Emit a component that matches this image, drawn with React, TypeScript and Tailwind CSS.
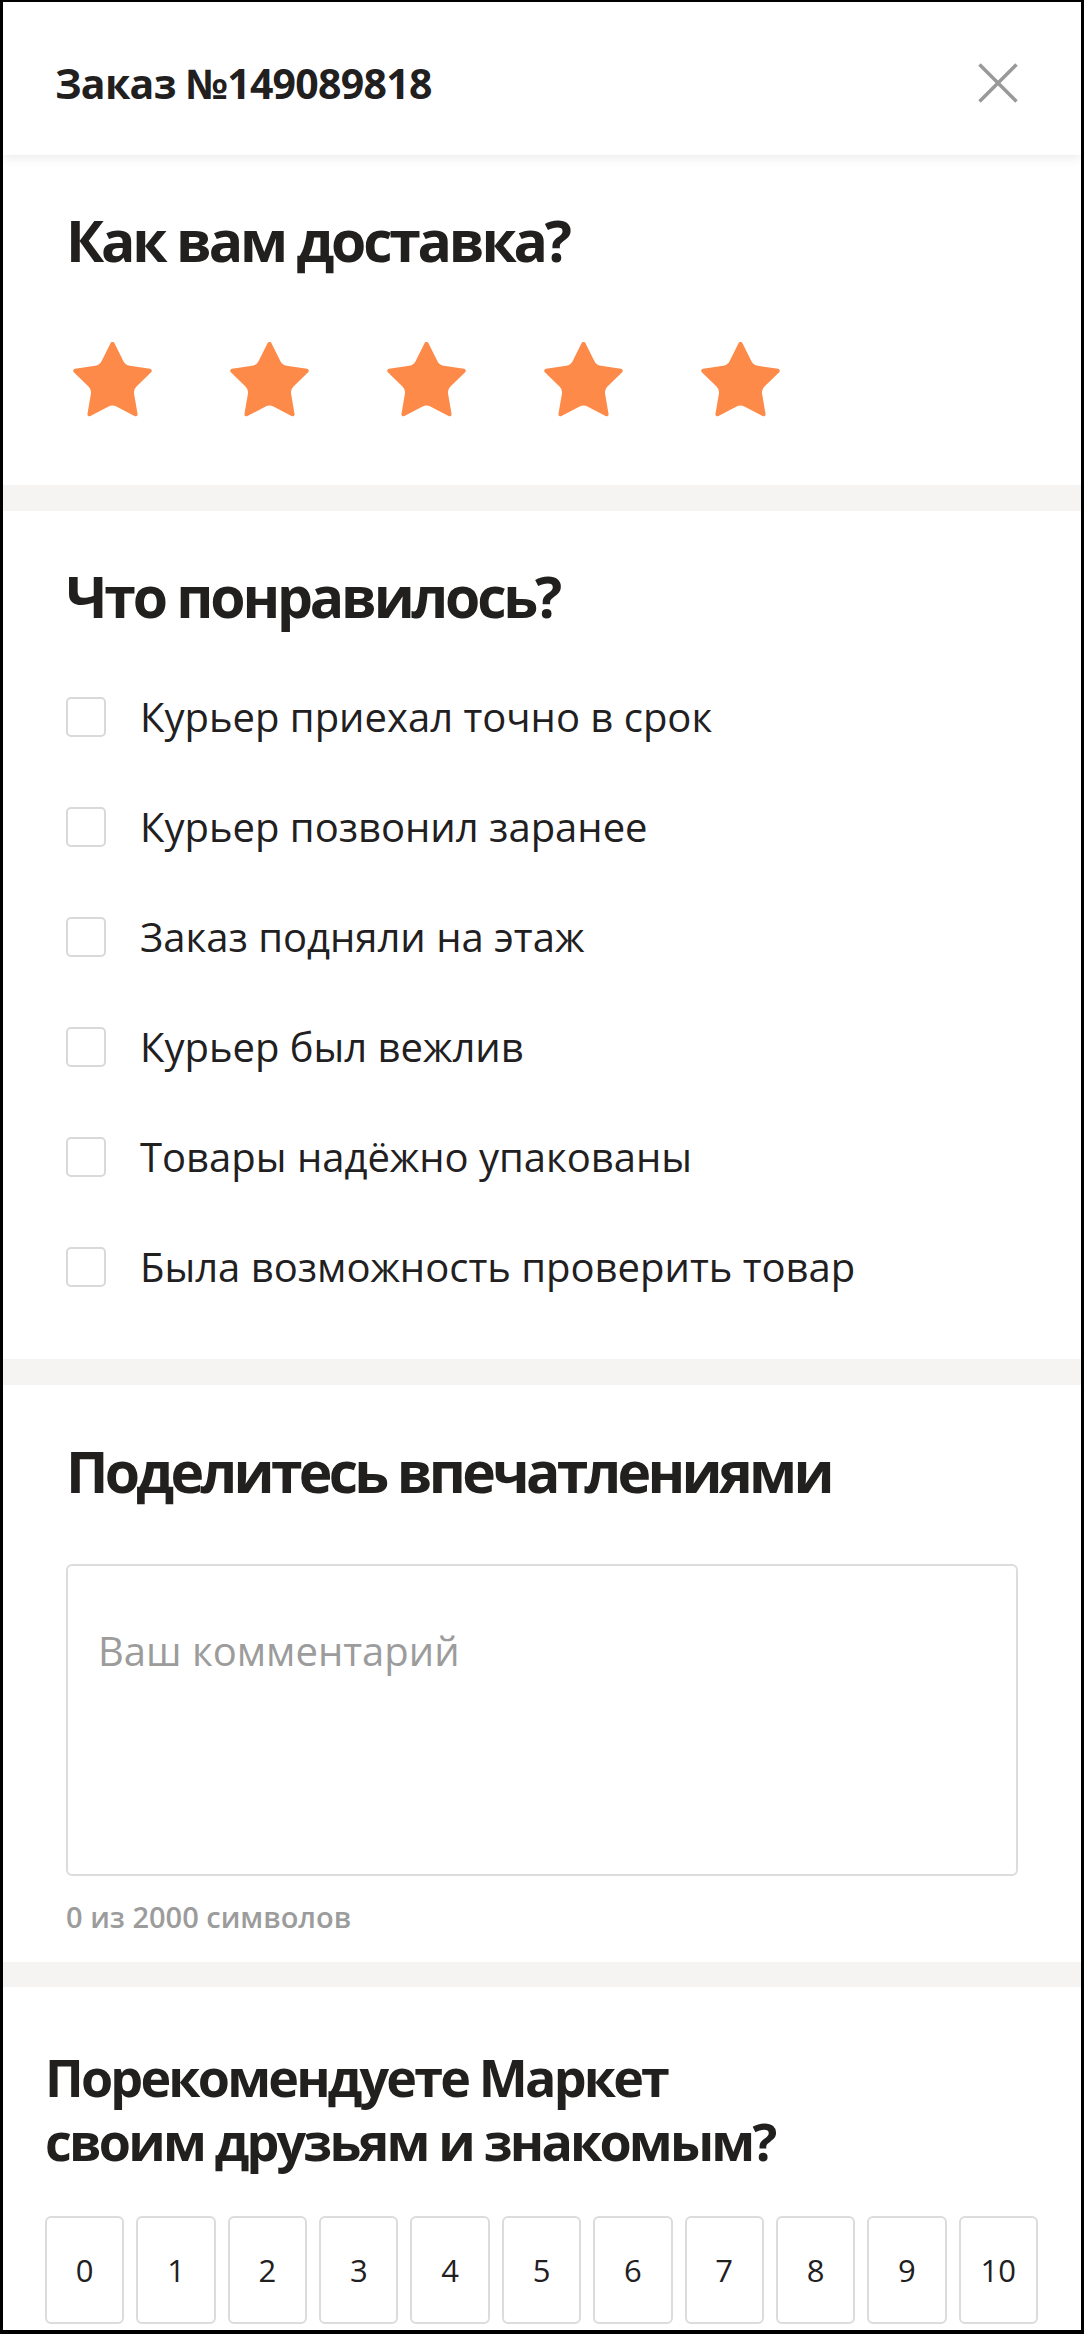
import { useState } from "react";

const reasons = [
  "Курьер приехал точно в срок",
  "Курьер позвонил заранее",
  "Заказ подняли на этаж",
  "Курьер был вежлив",
  "Товары надёжно упакованы",
  "Была возможность проверить товар",
];

function Star() {
  return (
    <svg width="79" height="75" viewBox="1.95 2.05 20.1 19.2" preserveAspectRatio="none" className="shrink-0">
      <path
        fill="#fd8a48"
        d="M11.525 2.295a.53.53 0 0 1 .95 0l2.31 4.679a2.123 2.123 0 0 0 1.595 1.16l5.166.756a.53.53 0 0 1 .294.904l-3.736 3.638a2.123 2.123 0 0 0-.611 1.878l.882 5.14a.53.53 0 0 1-.771.56l-4.618-2.428a2.122 2.122 0 0 0-1.973 0L6.396 21.01a.53.53 0 0 1-.77-.56l.881-5.139a2.122 2.122 0 0 0-.611-1.879L2.16 9.795a.53.53 0 0 1 .294-.906l5.165-.755a2.122 2.122 0 0 0 1.597-1.16z"
      />
    </svg>
  );
}

export default function App() {
  const [checked, setChecked] = useState<boolean[]>(reasons.map(() => false));
  const [comment, setComment] = useState("");

  return (
    <div className="h-[2334px] w-[1084px] overflow-hidden border-t-[2px] border-r-[3px] border-b-[4px] border-l-[3px] border-black bg-white font-['Open_Sans',sans-serif] text-[#21201f]">
      {/* header */}
      <header className="relative z-10 flex h-[153px] items-center justify-between pt-[9px] pr-[63px] pl-[52px] shadow-[0_3px_10px_rgba(0,0,0,0.08)]">
        <h1 className="text-[41px] leading-none font-bold tracking-[-0.7px]">Заказ №149089818</h1>
        <button className="text-[#999]">
          <svg width="40" height="40" viewBox="0 0 40 40" stroke="currentColor" strokeWidth={3.5}>
            <path d="M1.5 1.5l37 37M38.5 1.5l-37 37" />
          </svg>
        </button>
      </header>

      {/* rating */}
      <section className="pt-[57px] pb-[68px] pl-[63px]">
        <h2 className="text-[57px] leading-none font-bold tracking-[-3.2px]">Как вам доставка?</h2>
        <div className="mt-[73px] flex gap-[78px] pl-[7px]">
          {[0, 1, 2, 3, 4].map((i) => (
            <Star key={i} />
          ))}
        </div>
      </section>

      <div className="h-[26px] bg-[#f5f4f2]" />

      {/* what was liked */}
      <section className="pt-[57px] pb-[37px] pl-[63px]">
        <h2 className="text-[57px] leading-none font-bold tracking-[-3.2px]">Что понравилось?</h2>
        <div className="mt-[37px] flex flex-col">
          {reasons.map((r, i) => (
            <label key={r} className="flex h-[110px] cursor-pointer items-center gap-[34px]">
              <input
                type="checkbox"
                checked={checked[i]}
                onChange={() => setChecked(checked.map((c, j) => (j === i ? !c : c)))}
                className="h-[40px] w-[40px] shrink-0 cursor-pointer appearance-none rounded-[5px] border-2 border-[#d9d9d9] bg-white checked:border-[#fd8a48] checked:bg-[#fd8a48]"
              />
              <span className="text-[40px] leading-none">{r}</span>
            </label>
          ))}
        </div>
      </section>

      <div className="h-[26px] bg-[#f5f4f2]" />

      {/* comment */}
      <section className="pt-[58px] pr-[63px] pb-[31px] pl-[63px]">
        <h2 className="text-[57px] leading-none font-bold tracking-[-3.7px]">Поделитесь впечатлениями</h2>
        <textarea
          value={comment}
          onChange={(e) => setComment(e.target.value)}
          placeholder="Ваш комментарий"
          className="mt-[64px] block h-[312px] w-full resize-none rounded-[6px] border-2 border-[#dcdcdc] pt-[65px] pl-[30px] text-[40px] leading-none outline-none placeholder:text-[#9c9c9c]"
        />
        <p className="mt-[26px] text-[29px] leading-none font-semibold text-[#9c9c9c]">
          {comment.length} из 2000 символов
        </p>
      </section>

      <div className="h-[25px] bg-[#f5f4f2]" />

      {/* nps */}
      <section className="pt-[58px] pr-[43px] pl-[42px]">
        <h2 className="text-[52px] leading-[64px] font-bold tracking-[-2.8px]">
          Порекомендуете Маркет
          <br />
          своим друзьям и знакомым?
        </h2>
        <div className="mt-[43px] grid w-[993px] grid-cols-11 gap-[12px]">
          {Array.from({ length: 11 }, (_, n) => (
            <button
              key={n}
              className="flex h-[108px] items-center justify-center rounded-[6px] border-2 border-[#dcdcdc] text-[31px] leading-none"
            >
              {n}
            </button>
          ))}
        </div>
      </section>
    </div>
  );
}
